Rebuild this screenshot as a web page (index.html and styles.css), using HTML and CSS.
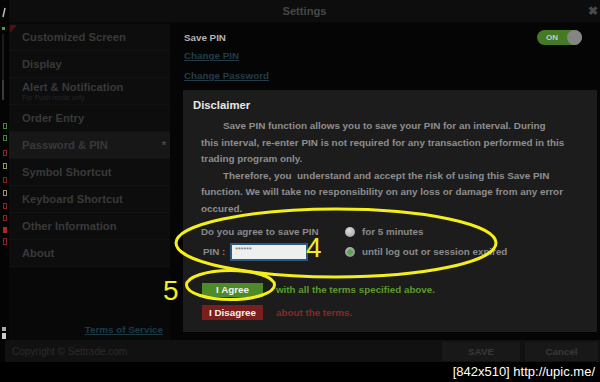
FILE: index.html
```html
<!DOCTYPE html>
<html lang="en">
<head>
    <meta charset="UTF-8">
    <meta name="viewport" content="width=device-width, initial-scale=1.0">
    <title>Settings</title>
    <link rel="stylesheet" href="styles.css">
</head>
<body>
    <div class="screen">
        <div class="app">
            <!--背景程序的边栏-->
            <svg class="strip" width="9" height="362" viewBox="0 0 9 362">
                <line x1="5" y1="8" x2="3" y2="17" stroke="#bbb" stroke-width="1.5"/>
                <rect x="2" y="27" width="3" height="3" fill="#4a9a3a"/>
                <rect x="2" y="34" width="2" height="66" fill="#1c1c1c"/>
                <rect x="2" y="80" width="2" height="20" fill="#3a3a3a"/>
                <rect x="3.5" y="123.5" width="3" height="5" fill="none" stroke="#3d8a35"/>
                <rect x="3.5" y="135.5" width="3" height="5" fill="none" stroke="#3d8a35"/>
                <rect x="3.5" y="150.5" width="3" height="5" fill="none" stroke="#8a2222"/>
                <rect x="3.5" y="163.5" width="3" height="5" fill="none" stroke="#9a9560"/>
                <rect x="3.5" y="177.5" width="3" height="5" fill="none" stroke="#8a2222"/>
                <rect x="3.5" y="190.5" width="3" height="5" fill="none" stroke="#9a9560"/>
                <rect x="3.5" y="203.5" width="3" height="5" fill="none" stroke="#8a2222"/>
                <rect x="3.5" y="215.5" width="3" height="5" fill="none" stroke="#8a2222"/>
                <rect x="3" y="227" width="4" height="6" fill="#a82828"/>
                <rect x="3.5" y="238.5" width="3" height="6" fill="none" stroke="#8a2222"/>
                <rect x="2" y="327" width="4" height="4" fill="#aaa"/>
                <rect x="2" y="333" width="4" height="6" fill="#ccc"/>
            </svg>

            <div class="window">
                <div class="titlebar">
                    <span></span>
                    <span class="title">Settings</span>
                    <span class="close">&#10006;</span>
                </div>

                <div class="main">
                    <div class="sidebar">
                        <ul class="menu">
                            <li>Customized Screen</li>
                            <li>Display</li>
                            <li><div>Alert &amp; Notification<small>For Push mode only</small></div></li>
                            <li>Order Entry</li>
                            <li class="active">Password &amp; PIN<span class="star">*</span></li>
                            <li>Symbol Shortcut</li>
                            <li>Keyboard Shortcut</li>
                            <li>Other Information</li>
                            <li>About</li>
                        </ul>
                        <a class="terms">Terms of Service</a>
                    </div>

                    <div class="content">
                        <div class="pinrow">
                            <b>Save PIN</b>
                            <span class="toggle"><span>ON</span><i></i></span>
                        </div>
                        <a class="link">Change PIN</a>
                        <a class="link">Change Password</a>

                        <div class="disclaimer">
                            <h3>Disclaimer</h3>
                            <div class="terms-text">
                                <p>Save PIN function allows you to save your PIN for an interval. During<br>this interval, re-enter PIN is not required for any transaction performed in this<br>trading program only.</p>
                                <p>Therefore, you &nbsp;understand and accept the risk of using this Save PIN<br>function. We will take no responsibility on any loss or damage from any error<br>occured.</p>
                            </div>
                            <div class="agree-form">
                                <span>Do you agree to save PIN</span>
                                <span class="radio"></span>
                                <span>for 5 minutes</span>
                                <span class="pin-label">PIN : <span class="pin-input">******</span></span>
                                <span class="radio on"></span>
                                <span>until log out or session expired</span>
                            </div>
                            <div class="choice">
                                <button class="btn agree">I Agree</button>
                                <span class="agree-note">with all the terms specified above.</span>
                            </div>
                            <div class="choice">
                                <button class="btn disagree">I Disagree</button>
                                <span class="disagree-note">about the terms.</span>
                            </div>
                        </div>
                    </div>
                </div>

                <div class="footer">
                    <span class="copy">Copyright &copy; Settrade.com</span>
                    <span class="fbtn save">SAVE</span>
                    <span class="fbtn cancel">Cancel</span>
                </div>
            </div>
        </div>
        <div class="watermark">[842x510] http://upic.me/</div>

        <!--标注-->
        <svg class="marks" width="600" height="382" viewBox="0 0 600 382">
            <ellipse cx="336" cy="243" rx="160" ry="34" fill="none" stroke="#f3ee1c" stroke-width="3"/>
            <ellipse cx="230.5" cy="285" rx="44" ry="14.5" fill="none" stroke="#f3ee1c" stroke-width="3"/>
            <text x="306" y="257" class="num">4</text>
            <text x="163" y="300" class="num">5</text>
        </svg>
    </div>
</body>
</html>
```

FILE: styles.css
```css
* {
  box-sizing: border-box;
}

body {
  margin: 0;
  background: #000;
  font-family: "Liberation Sans", Arial, sans-serif;
}

.screen {
  width: 600px;
  height: 382px;
  position: relative;
  display: flex;
  flex-direction: column;
  overflow: hidden;
}

.app {
  display: flex;
  height: 362px;
}

.strip {
  flex: none;
  display: block;
  background: #040404;
}

.window {
  flex: 1;
  display: flex;
  flex-direction: column;
  background: #050505;
}

.titlebar {
  height: 22px;
  display: grid;
  grid-template-columns: 1fr auto 1fr;
  align-items: center;
  background: #0d0d0d;
}

.title {
  font-size: 11.2px;
  font-weight: bold;
  color: #474747;
}

.close {
  justify-self: end;
  margin-right: 2px;
  font-size: 12px;
  font-weight: bold;
  color: #4a4a4a;
}

.main {
  flex: 1;
  display: flex;
}

.sidebar {
  width: 161px;
  display: flex;
  flex-direction: column;
  padding-top: 2px;
  background: #080808;
}

.menu {
  list-style: none;
  margin: 0;
  padding: 0;
  position: relative;
}

.menu::before {
  content: "";
  position: absolute;
  left: 1px;
  top: 1px;
  border-top: 8px solid #4a1212;
  border-right: 7px solid transparent;
}

.menu li {
  height: 27px;
  display: flex;
  align-items: center;
  justify-content: space-between;
  padding: 0 4px 0 13px;
  border-bottom: 1px solid #131313;
  background: #0d0d0d;
  font-size: 11.2px;
  font-weight: bold;
  color: #393939;
}

.menu li small {
  display: block;
  margin-top: 1px;
  font-size: 7px;
  line-height: 7px;
  font-weight: normal;
  color: #262626;
}

.menu li.active {
  background: #171717;
}

.star {
  font-size: 11px;
  color: #4a4a4a;
}

.terms {
  margin-top: auto;
  margin-bottom: 5px;
  margin-right: 7px;
  align-self: flex-end;
  font-size: 9.8px;
  font-weight: bold;
  color: #1d3a44;
  text-decoration: underline;
}

.content {
  flex: 1;
  padding-left: 13px;
}

.pinrow {
  height: 24px;
  padding: 6px 18px 0 1px;
  display: flex;
  align-items: center;
  justify-content: space-between;
  font-size: 9.8px;
  color: #b4b4b4;
}

.toggle {
  width: 45px;
  height: 15px;
  border-radius: 8px;
  display: flex;
  align-items: center;
  justify-content: space-between;
  background: #457a24;
}

.toggle span {
  padding-left: 9px;
  font-size: 8px;
  font-weight: bold;
  color: #c8c8c8;
}

.toggle i {
  width: 15px;
  height: 15px;
  border-radius: 50%;
  background: #858585;
}

.link {
  display: block;
  height: 20px;
  line-height: 20px;
  padding-left: 1px;
  font-size: 9.8px;
  font-weight: bold;
  color: #233c48;
  text-decoration: underline;
}

.disclaimer {
  height: 242px;
  margin-top: 4px;
  margin-right: 3px;
  padding: 7px 0 0 10px;
  background: #1c1c1c;
}

.disclaimer h3 {
  margin: 0;
  line-height: 16px;
  font-size: 11.3px;
  color: #e8e8e8;
}

.terms-text {
  margin: 5px 0 0 8px;
  font-size: 9.9px;
  font-weight: bold;
  line-height: 16.6px;
  color: #8e8e8e;
}

.terms-text p {
  margin: 0;
  text-indent: 22px;
  white-space: nowrap;
}

.agree-form {
  margin: 4px 0 0 8px;
  display: grid;
  grid-template-columns: 137px 10px auto;
  grid-auto-rows: 20px;
  column-gap: 7px;
  align-items: center;
  font-size: 9.8px;
  font-weight: bold;
  color: #8a8a8a;
}

.pin-label {
  display: flex;
  align-items: center;
  gap: 5px;
  padding-left: 2px;
}

.pin-input {
  width: 78px;
  height: 18px;
  padding: 1px 3px;
  border: 2px solid #2d5b80;
  background: #eef0f0;
  font-size: 7px;
  line-height: 7px;
  font-weight: normal;
  color: #666;
}

.radio {
  width: 10px;
  height: 10px;
  border-radius: 50%;
  background: radial-gradient(circle at 40% 35%, #dcdcdc, #9a9a9a);
}

.radio.on {
  background: radial-gradient(circle, #4fa84a 0 2.5px, transparent 3px),
    radial-gradient(circle at 40% 35%, #bcbcbc, #7c7c7c);
}

.choice {
  margin: 21px 0 0 9px;
  height: 14px;
  display: flex;
  align-items: center;
  gap: 13px;
  font-size: 9.8px;
  font-weight: bold;
}

.choice + .choice {
  margin-top: 8px;
  height: 15px;
}

.btn {
  width: 61px;
  height: 100%;
  padding: 0;
  border: 0;
  font-family: inherit;
  font-size: 9.8px;
  font-weight: bold;
  color: #f2f2f2;
}

.btn.agree {
  background: #4e8a29;
}

.btn.disagree {
  background: #7a1e1e;
}

.agree-note {
  color: #5c9a2e;
}

.disagree-note {
  color: #86292b;
}

.footer {
  height: 22px;
  display: flex;
  align-items: center;
  margin-left: -4px;
  padding-left: 7px;
  background: #111;
}

.copy {
  flex: 1;
  font-size: 10px;
  color: #2b2b2b;
}

.fbtn {
  height: 19px;
  line-height: 19px;
  text-align: center;
  background: #181818;
  font-size: 9.8px;
  font-weight: bold;
  color: #383838;
}

.save {
  width: 78px;
}

.cancel {
  width: 73px;
  margin: 0 2px 0 5px;
}

.watermark {
  height: 20px;
  line-height: 20px;
  padding-right: 5px;
  text-align: right;
  font-size: 13px;
  color: #fff;
}

.marks {
  position: absolute;
  left: 0;
  top: 0;
  pointer-events: none;
}

.num {
  font-family: "Liberation Sans", Arial, sans-serif;
  font-size: 28px;
  fill: #f3ee1c;
}
```
